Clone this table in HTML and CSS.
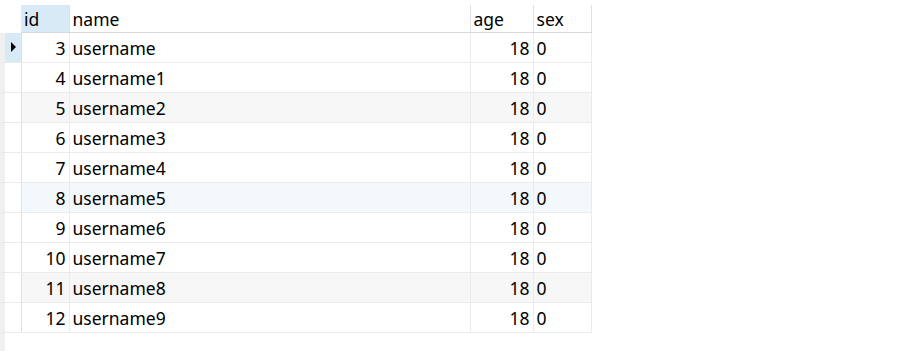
FILE: index.html
```html
<!DOCTYPE html>
<html>
<head>
<meta charset="utf-8">
<link rel="stylesheet" href="styles.css">
</head>
<body>
<div class="grid">
  <table class="data">
    <colgroup>
      <col class="c-strip"><col class="c-ind"><col class="c-id"><col class="c-name"><col class="c-age"><col class="c-sex">
    </colgroup>
    <thead>
      <tr class="head">
        <th class="strip top"></th>
        <th class="ind top"></th>
        <th class="h-id">id</th>
        <th>name</th>
        <th>age</th>
        <th>sex</th>
      </tr>
    </thead>
    <tbody>
      <tr class="cur"><td class="strip"></td><td class="ind"><span class="arrow"></span></td><td class="num">3</td><td>username</td><td class="num">18</td><td>0</td></tr>
      <tr><td class="strip"></td><td class="ind"></td><td class="num">4</td><td>username1</td><td class="num">18</td><td>0</td></tr>
      <tr class="alt"><td class="strip"></td><td class="ind"></td><td class="num">5</td><td>username2</td><td class="num">18</td><td>0</td></tr>
      <tr><td class="strip"></td><td class="ind"></td><td class="num">6</td><td>username3</td><td class="num">18</td><td>0</td></tr>
      <tr><td class="strip"></td><td class="ind"></td><td class="num">7</td><td>username4</td><td class="num">18</td><td>0</td></tr>
      <tr class="hover"><td class="strip"></td><td class="ind"></td><td class="num">8</td><td>username5</td><td class="num">18</td><td>0</td></tr>
      <tr><td class="strip"></td><td class="ind"></td><td class="num">9</td><td>username6</td><td class="num">18</td><td>0</td></tr>
      <tr><td class="strip"></td><td class="ind"></td><td class="num">10</td><td>username7</td><td class="num">18</td><td>0</td></tr>
      <tr class="alt"><td class="strip"></td><td class="ind"></td><td class="num">11</td><td>username8</td><td class="num">18</td><td>0</td></tr>
      <tr><td class="strip"></td><td class="ind"></td><td class="num">12</td><td>username9</td><td class="num">18</td><td>0</td></tr>
    </tbody>
  </table>
</div>
</body>
</html>
```
FILE: styles.css
```css
html, body {
  margin: 0;
  padding: 0;
  background: #ffffff;
}
body {
  font-family: "Noto Sans", "Open Sans", sans-serif;
  font-size: 17.5px;
  color: #000000;
  height: 351px;
  overflow: hidden;
}
.grid {
  padding-top: 5px;
  height: 346px;
  background: linear-gradient(to right, #f0f0f0 0, #f0f0f0 5px, transparent 5px);
  background-position: 0 28px;
  background-repeat: no-repeat;
}
.data {
  border-collapse: collapse;
  table-layout: fixed;
  width: 591px;
}
.c-strip { width: 5px; }
.c-ind { width: 16px; }
.c-id { width: 48px; }
.c-name { width: 401px; }
.c-age { width: 63px; }
.c-sex { width: 58px; }
th, td {
  padding: 0 3px;
  height: 29px;
  border-right: 1px solid #ebebeb;
  border-bottom: 1px solid #ebebeb;
  text-align: left;
  font-weight: normal;
  white-space: nowrap;
  overflow: hidden;
  line-height: 20px;
}
th {
  height: 27px;
  border-bottom: 1px solid #d9d9d9;
  border-right: 1px solid #e0e0e0;
  vertical-align: middle;
}
th.h-id {
  background: #d9eaf7;
}
th.top {
  border-bottom: none;
  border-right: none;
}
.strip {
  padding: 0;
  background: #f0f0f0;
  border-right: none;
}
th.strip { background: #ffffff; }
.ind {
  padding: 0;
  border-right: 1px solid #e0e0e0;
}
td.num {
  text-align: right;
}
tr.alt td { background: #f7f7f7; }
tr.alt td.strip, tr.hover td.strip { background: #f0f0f0; }
tr.hover td { background: #f3f8fd; }
tr.alt td.ind { background: #ffffff; }
tr.hover td.ind { background: #ffffff; }
tr.cur td.ind { background: #d9eaf7; }
.arrow {
  display: block;
  width: 0;
  height: 0;
  margin-left: 6px;
  border-top: 5px solid transparent;
  border-bottom: 5px solid transparent;
  border-left: 5px solid #000000;
}
```
